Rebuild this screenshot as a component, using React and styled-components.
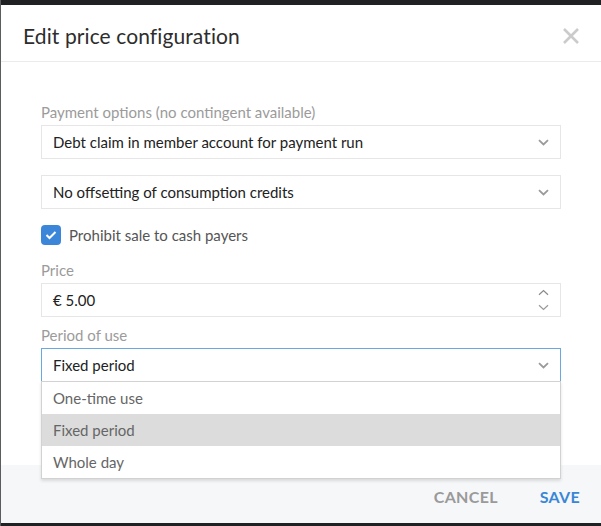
import React from 'react'
import styled, { createGlobalStyle } from 'styled-components'

const GlobalStyle = createGlobalStyle`
    body {
        margin: 0;
        background: #1f2123;
        font-family: 'Lato', 'Noto Sans', sans-serif;
    }
`

const Backdrop = styled.div`
    width: 601px;
    height: 526px;
    padding: 5px 0 3px 0;
    box-sizing: border-box;
    background: #1f2123;
    border-left: 1px solid #5a5c5e;
`

const Modal = styled.div`
    width: 600px;
    height: 518px;
    background: #fff;
    display: flex;
    flex-direction: column;
`

const Header = styled.header`
    height: 57px;
    padding: 5px 22px 0;
    box-sizing: border-box;
    border-bottom: 1px solid #ebebeb;
    display: flex;
    align-items: center;
    justify-content: space-between;
    h2 {
        margin: 0;
        font-size: 21px;
        font-weight: 400;
        color: #2d2d2d;
        letter-spacing: 0.1px;
    }
`

const Close = styled.button`
    border: none;
    background: none;
    padding: 0;
    margin-right: -1px;
    width: 18px;
    height: 18px;
    cursor: pointer;
    display: flex;
`

const Body = styled.div`
    flex: 1;
    padding: 42px 40px 0;
    display: flex;
    flex-direction: column;
`

const Label = styled.label`
    display: block;
    font-size: 15px;
    line-height: 17px;
    color: #9b9b9b;
    margin: ${p => p.$top || 0}px 0 4px;
`

const SelectBox = styled.div`
    position: relative;
    height: 34px;
    margin-top: ${p => p.$top || 0}px;
    box-sizing: border-box;
    border: 1px solid ${p => (p.$open ? '#6aa8e0' : '#e6e6e6')};
    display: flex;
    align-items: center;
    justify-content: space-between;
    padding: 0 11px;
    font-size: 15px;
    color: #222;
`

const Chevron = () => (
    <svg width="11" height="7" viewBox="0 0 11 7">
        <path d="M1 1.2 L5.5 5.5 L10 1.2" fill="none" stroke="#9a9a9a" strokeWidth="1.8" />
    </svg>
)

const Spinner = styled.div`
    display: flex;
    flex-direction: column;
    gap: 8px;
    svg path { stroke-width: 1.2; }
`

const Dropdown = styled.ul`
    position: absolute;
    top: 100%;
    left: -1px;
    right: -1px;
    margin: 0;
    padding: 0;
    list-style: none;
    background: #fff;
    border: 1px solid #d2d2d2;
    box-shadow: 0 2px 3px rgba(0, 0, 0, 0.12);
    z-index: 2;
`

const Option = styled.li`
    height: 32px;
    display: flex;
    align-items: center;
    padding: 0 11px;
    font-size: 15px;
    color: #666;
    background: ${p => (p.$active ? '#dcdcdc' : '#fff')};
`

const CheckRow = styled.label`
    display: flex;
    align-items: center;
    gap: 8px;
    margin-top: 16px;
    height: 20px;
    font-size: 15px;
    color: #555;
`

const Check = styled.span`
    width: 20px;
    height: 20px;
    border-radius: 4px;
    background: #3b86d8;
    display: flex;
    align-items: center;
    justify-content: center;
`

const Footer = styled.footer`
    height: 58px;
    padding: 4px 21px 0;
    box-sizing: border-box;
    background: #f6f7f9;
    display: flex;
    align-items: center;
    justify-content: flex-end;
    gap: 42px;
`

const FooterButton = styled.button`
    border: none;
    background: none;
    padding: 0;
    font-family: 'Lato', sans-serif;
    font-size: 16px;
    font-weight: 700;
    letter-spacing: 0.3px;
    text-transform: uppercase;
    color: ${p => (p.$primary ? '#3a86d6' : '#9a9a9a')};
    cursor: pointer;
`

function App() {
    const options = ['One-time use', 'Fixed period', 'Whole day']
    return (
        <>
        <GlobalStyle />
        <Backdrop>
            <Modal>
                <Header>
                    <h2>Edit price configuration</h2>
                    <Close aria-label="Close">
                        <svg width="18" height="18" viewBox="0 0 18 18">
                            <path d="M2 2 L16 16 M16 2 L2 16" stroke="#cbcbcb" strokeWidth="2.6" />
                        </svg>
                    </Close>
                </Header>
                <Body>
                    <Label>Payment options (no contingent available)</Label>
                    <SelectBox>
                        <span>Debt claim in member account for payment run</span>
                        <Chevron />
                    </SelectBox>
                    <SelectBox $top={16}>
                        <span>No offsetting of consumption credits</span>
                        <Chevron />
                    </SelectBox>
                    <CheckRow>
                        <Check>
                            <svg width="12" height="10" viewBox="0 0 12 10">
                                <path d="M1.5 5 L4.5 8 L10.5 2" fill="none" stroke="#fff" strokeWidth="2" />
                            </svg>
                        </Check>
                        Prohibit sale to cash payers
                    </CheckRow>
                    <Label $top={17}>Price</Label>
                    <SelectBox>
                        <span>€ 5.00</span>
                        <Spinner>
                            <svg width="11" height="7" viewBox="0 0 11 7">
                                <path d="M1 5.8 L5.5 1.5 L10 5.8" fill="none" stroke="#8a8a8a" />
                            </svg>
                            <Chevron />
                        </Spinner>
                    </SelectBox>
                    <Label $top={10}>Period of use</Label>
                    <SelectBox $open>
                        <span>Fixed period</span>
                        <Chevron />
                        <Dropdown>
                            {options.map(o => (
                                <Option key={o} $active={o === 'Fixed period'}>{o}</Option>
                            ))}
                        </Dropdown>
                    </SelectBox>
                </Body>
                <Footer>
                    <FooterButton>Cancel</FooterButton>
                    <FooterButton $primary>Save</FooterButton>
                </Footer>
            </Modal>
        </Backdrop>
        </>
    )
}

export default App
